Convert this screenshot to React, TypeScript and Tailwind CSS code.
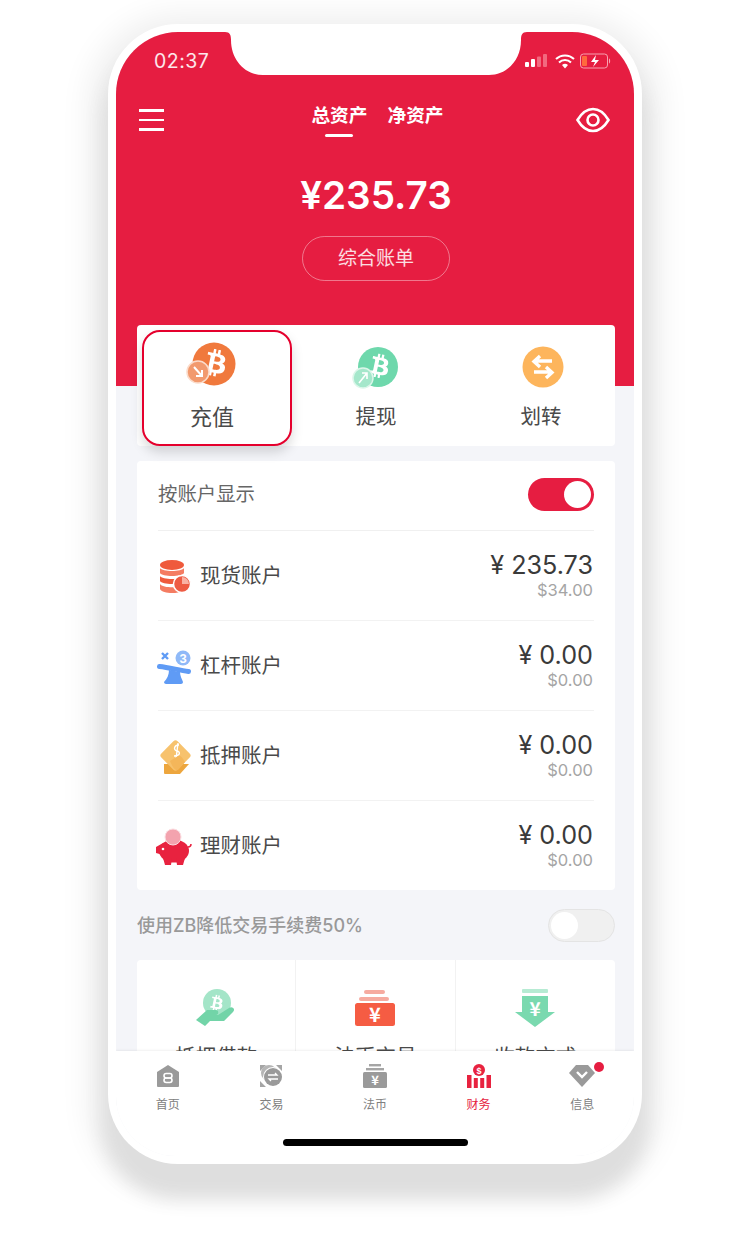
import React from 'react';
import { FaBtc } from 'react-icons/fa';

const FONT = "font-['Inter','Noto_Sans_CJK_SC',sans-serif]";

function Btc({ x, y, size, color = '#fff' }: { x: number; y: number; size: number; color?: string }) {
  return (
    <g transform={`rotate(12 ${x} ${y})`}>
      <FaBtc x={x - size / 2} y={y - size / 2} size={size} color={color} />
    </g>
  );
}

function DepositIcon() {
  return (
    <svg width="56" height="50" viewBox="0 0 56 50">
      <circle cx="31" cy="22" r="21.5" fill="#f0793d" />
      <Btc x={33} y={21} size={27} />
      <circle cx="15" cy="30" r="11" fill="#f29a6e" stroke="#fbdccb" strokeWidth="1.5" />
      <path d="M11 25l8 9M19 28v6h-6" stroke="#fff" strokeWidth="2" fill="none" />
    </svg>
  );
}

function WithdrawIcon() {
  return (
    <svg width="56" height="50" viewBox="0 0 56 50">
      <circle cx="31" cy="24" r="20" fill="#6ed8ac" />
      <Btc x={33} y={23} size={24} />
      <circle cx="16" cy="35" r="10" fill="#a5e7cb" stroke="#dcf6ea" strokeWidth="1.5" />
      <path d="M12 40l8-10M20 36v-6h-5" stroke="#fff" strokeWidth="1.6" fill="none" />
    </svg>
  );
}

function TransferIcon() {
  return (
    <svg width="42" height="42" viewBox="0 0 42 42">
      <circle cx="21" cy="21" r="20.5" fill="#fdb55c" />
      <path d="M30 15H14M18 10l-6 5.500 6 5.500" stroke="#fff" strokeWidth="3.400" fill="none" />
      <path d="M12 26h16M24 21l6 5.500-6 5.500" stroke="#fff" strokeWidth="3.400" fill="none" />
    </svg>
  );
}

function SpotIcon() {
  return (
    <svg width="34" height="36" viewBox="0 0 34 36">
      <ellipse cx="14" cy="6" rx="12" ry="5" fill="#ef5a3c" />
      <path d="M2 9c2 4 22 4 24 0v5c-2 4-22 4-24 0z" fill="#f47c62" />
      <path d="M2 17c2 4 22 4 24 0v5c-2 4-22 4-24 0z" fill="#ef5a3c" />
      <path d="M2 25c2 4 18 4 20 2l2 5c-4 3-20 3-22-2z" fill="#f47c62" />
      <circle cx="24" cy="25" r="8.500" fill="#ee5b43" stroke="#fff" strokeWidth="1.500" />
      <path d="M24 25v-7a7 7 0 0 1 7 7z" fill="#f9b2a4" />
    </svg>
  );
}

function LeverIcon() {
  return (
    <svg className="-ml-[2px]" width="36" height="34" viewBox="0 0 36 34">
      <path d="M6 3l6 6M12 3l-6 6" stroke="#5f9bf5" strokeWidth="2.400" />
      <circle cx="27" cy="8" r="7.500" fill="#8fb9f8" />
      <text x="27" y="13" textAnchor="middle" fontSize="13" fontFamily="Liberation Sans" fontWeight="700" fill="#fff">3</text>
      <path d="M3.500 16.500c10 1 20 4 29 5" stroke="#5f9bf5" strokeWidth="5" strokeLinecap="round" fill="none" />
      <path d="M13 20l11 2c0 4 2 7 3 10 0 1-1 2-2 2H10c-1 0-2-1-2-2 3-3 5-7 5-12z" fill="#5f9bf5" />
    </svg>
  );
}

function PledgeIcon() {
  return (
    <svg width="34" height="38" viewBox="0 0 34 38">
      <path d="M6 26v9a1 1 0 0 0 1 1h15l9-10z" fill="#eda63e" />
      <rect x="6" y="6" width="23" height="23" rx="3" transform="rotate(45 17.500 17.500)" fill="#f7c26d" />
      <path d="M21 7c-5 0-6 5-2 6s3 5-3 5M20 5l-2 16" stroke="#fff" strokeWidth="1.400" fill="none" />
      <path d="M12 23l8-5c3-1 5 3 7 6l-7 8c-3 1-6-4-8-9z" fill="#f4b65a" />
    </svg>
  );
}

function PiggyIcon() {
  return (
    <svg className="-ml-[3px]" width="38" height="38" viewBox="0 0 38 38">
      <ellipse cx="19" cy="23" rx="15" ry="11.500" fill="#e8223f" />
      <path d="M1 19l7-4v12l-7-2zM8 30h9l-1 7H10zM21 30h9l-2 7h-6z" fill="#e8223f" />
      <path d="M33 19c3 0 3-2 3-3" stroke="#e8223f" strokeWidth="1.500" fill="none" />
      <circle cx="18" cy="9" r="8" fill="#f3a3ae" stroke="#fbdde1" strokeWidth="1" />
      <circle cx="8" cy="21" r="1.300" fill="#fff" />
    </svg>
  );
}

function LoanIcon() {
  return (
    <svg width="42" height="42" viewBox="0 0 42 42">
      <circle cx="22" cy="15" r="14" fill="#a4e5c8" />
      <Btc x={22} y={15} size={16} />
      <path d="M1 32l11-10h9c3 0 3 5 0 5h-3 5l11-7c3-2 7 1 4 4l-9 9H15l-5 5z" fill="#72d4a8" />
    </svg>
  );
}

function FiatIcon() {
  return (
    <svg width="42" height="38" viewBox="0 0 42 38">
      <rect x="10" y="1" width="21" height="4" rx="2" fill="#f6aba0" />
      <rect x="5" y="8" width="30" height="4" rx="2" fill="#f6aba0" />
      <rect x="1" y="14" width="40" height="23" rx="2.500" fill="#f55c43" />
      <text x="21" y="33" textAnchor="middle" fontSize="20" fontWeight="700" fontFamily="Noto Sans CJK SC" fill="#fff">¥</text>
    </svg>
  );
}

function ReceiveIcon() {
  return (
    <svg width="42" height="40" viewBox="0 0 42 40">
      <rect x="8" y="1" width="26" height="4" rx="1" fill="#b6ebd3" />
      <path d="M8 8h26v16h7L21 39 1 24h7z" fill="#7ad9af" strokeLinejoin="round" />
      <text x="21" y="28" textAnchor="middle" fontSize="19" fontWeight="700" fontFamily="Noto Sans CJK SC" fill="#fff">¥</text>
    </svg>
  );
}

function NavHome() {
  return (
    <svg width="24" height="24" viewBox="0 0 24 24">
      <path d="M12 1l11 7v14a1 1 0 0 1-1 1H2a1 1 0 0 1-1-1V8z" fill="#9a9a9a" />
      <rect x="8" y="9.500" width="8" height="4.500" rx="2.200" fill="none" stroke="#fff" strokeWidth="1.600" />
      <rect x="8" y="14" width="8" height="4.500" rx="2.200" fill="none" stroke="#fff" strokeWidth="1.600" />
    </svg>
  );
}

function NavTrade() {
  return (
    <svg width="24" height="24" viewBox="0 0 24 24">
      <path d="M1 1h6L1 7zM23 1v6l-6-6zM1 23v-6l6 6z" fill="#a5a5a5" />
      <circle cx="10" cy="9" r="8" fill="#b5b5b5" />
      <circle cx="14" cy="13" r="10" fill="#fff" />
      <circle cx="14" cy="13" r="9" fill="#9a9a9a" />
      <path d="M9 11h9l-2-2M19 15h-9l2 2" stroke="#fff" strokeWidth="1.300" fill="none" />
    </svg>
  );
}

function NavFiat() {
  return (
    <svg width="24" height="25" viewBox="0 0 24 25">
      <rect x="6" y="0" width="12" height="2.400" fill="#a5a5a5" />
      <rect x="3" y="4" width="18" height="2.400" fill="#a5a5a5" />
      <rect x="0" y="8" width="24" height="16" rx="1.500" fill="#9a9a9a" />
      <text x="12" y="21" textAnchor="middle" fontSize="13" fontWeight="700" fontFamily="Noto Sans CJK SC" fill="#fff">¥</text>
    </svg>
  );
}

function NavFinance() {
  return (
    <svg width="24" height="24" viewBox="0 0 24 24">
      <circle cx="12" cy="6" r="6" fill="#e8223f" />
      <text x="12" y="9.500" textAnchor="middle" fontSize="9" fontWeight="700" fontFamily="Liberation Sans" fill="#fff">$</text>
      <path d="M0 11h4.500v13H0zM6.800 14h4v10h-4zM13.200 14h4v10h-4zM19.500 11H24v13h-4.500z" fill="#e8223f" />
    </svg>
  );
}

function NavMessage() {
  return (
    <svg width="26" height="24" viewBox="0 0 26 24">
      <path d="M7 1h12l7 8-13 14L0 9z" fill="#9a9a9a" />
      <path d="M8 8l5 5 5-5" stroke="#fff" strokeWidth="2.400" fill="none" />
    </svg>
  );
}

const accounts = [
  { name: '现货账户', cny: '¥ 235.73', usd: '$34.00', icon: <SpotIcon /> },
  { name: '杠杆账户', cny: '¥ 0.00', usd: '$0.00', icon: <LeverIcon /> },
  { name: '抵押账户', cny: '¥ 0.00', usd: '$0.00', icon: <PledgeIcon /> },
  { name: '理财账户', cny: '¥ 0.00', usd: '$0.00', icon: <PiggyIcon /> },
];

const tabs = [
  { name: '首页', icon: <NavHome /> },
  { name: '交易', icon: <NavTrade /> },
  { name: '法币', icon: <NavFiat /> },
  { name: '财务', icon: <NavFinance />, active: true },
  { name: '信息', icon: <NavMessage />, dot: true },
];

export default function App() {
  return (
    <div className={`w-[750px] h-[1238px] bg-white pt-6 overflow-hidden ${FONT}`}>
      <div className="mx-auto w-[534px] h-[1140px] p-2 rounded-[70px] bg-white shadow-[0_28px_18px_6px_#dedede,0_10px_32px_18px_#eeeeee]">
        <div className="relative w-[518px] h-[1124px] rounded-t-[62px] rounded-b-[60px] overflow-hidden bg-[#f4f5f9] flex flex-col">
          {/* notch */}
          <svg className="absolute left-[109px] top-0" width="302" height="43" viewBox="0 0 302 43">
            <path d="M0 0C5 0 6 3 6 8C6 28 20 43 38 43H264C282 43 296 28 296 8C296 3 297 0 302 0Z" fill="#fff" />
          </svg>

          <div className="h-[354px] shrink-0 bg-[#e61d41] text-white flex flex-col items-center">
            <div className="w-full h-[58px] pl-[38px] pr-[22px] flex items-center justify-between">
              <span className="mt-[2px] text-[19.500px] tracking-[0.5px] text-white/90">02:37</span>
              <div className="flex items-center">
                <svg width="22" height="14" viewBox="0 0 22 14">
                  <rect x="0" y="8" width="4" height="5" rx="1" fill="#fff" />
                  <rect x="6" y="5" width="4" height="8" rx="1" fill="#fff" />
                  <rect x="12" y="2.500" width="4" height="10.500" rx="1" fill="#f2697f" />
                  <rect x="18" y="0" width="4" height="13" rx="1" fill="#f2697f" />
                </svg>
                <svg className="ml-2" width="20" height="15" viewBox="0 0 20 15">
                  <path d="M1 5a13 13 0 0 1 18 0M4 8.500a8.500 8.500 0 0 1 12 0" stroke="#fff" strokeWidth="2" fill="none" />
                  <path d="M7 11a4.500 4.500 0 0 1 6 0l-3 3.500z" fill="#fff" />
                </svg>
                <svg className="ml-[5px]" width="32" height="16" viewBox="0 0 32 16">
                  <rect x="0.500" y="1" width="27" height="14" rx="3" fill="none" stroke="#f7a3b1" />
                  <rect x="2" y="3" width="5" height="10" rx="1" fill="#ff6a3d" />
                  <path d="M29 5.500c1.500 0 1.500 5 0 5z" fill="#f7a3b1" />
                  <path d="M16 2l-5 7h4l-2 5 6-7h-4z" fill="#fff" />
                </svg>
              </div>
            </div>

            <div className="relative w-full h-[60px] pl-[23px] pr-6 flex items-center justify-between">
              <div className="w-[25px] flex flex-col gap-[7px]">
                <div className="h-[2.500px] bg-white" />
                <div className="h-[2.500px] bg-white" />
                <div className="h-[2.500px] bg-white" />
              </div>
              <div className="flex gap-5 ml-[15px]">
                <div className="flex flex-col items-center">
                  <span className="text-[18.700px] leading-[26px] font-bold">总资产</span>
                  <div className="mt-[5px] w-7 h-[3px] rounded-full bg-white" />
                </div>
                <span className="text-[18.700px] leading-[26px] font-bold">净资产</span>
              </div>
              <svg width="34" height="26" viewBox="0 0 34 26" fill="none">
                <path d="M1.500 13C6 5.500 11 2 17 2s11 3.500 15.500 11C28 20.500 23 24 17 24S6 20.500 1.500 13z" stroke="#fff" strokeWidth="2.600" />
                <circle cx="17" cy="13" r="5.500" stroke="#fff" strokeWidth="2.600" />
              </svg>
            </div>

            <div className="mt-5 ml-[2px] h-[50px] text-[38.700px] leading-[50px] font-semibold">¥235.73</div>
            <div className="mt-4 ml-[2px] w-[148px] h-[45px] flex items-center justify-center rounded-full border border-white/40 text-[19px] text-white/85">
              <span className="mt-[2px]">综合账单</span>
            </div>
          </div>

          <div className="relative -mt-[61px] ml-[21px] mr-[19px] h-[121px] shrink-0 pl-[5px] pt-[5px] rounded-[4px] bg-white grid grid-cols-[150px_168px_155px]">
            <div className="h-[116px] flex flex-col items-center rounded-[18px] border-2 border-[#e5002d] bg-white shadow-[0_6px_12px_rgba(0,0,0,0.15)]">
              <div className="h-[50px] mt-[10px] -ml-3"><DepositIcon /></div>
              <span className="mt-[10px] -ml-[10px] text-[22px] leading-[30px] text-[#4a4a4a]">充值</span>
            </div>
            <div className="h-[116px] flex flex-col items-center">
              <div className="h-[50px] mt-[13px] -ml-[2px]"><WithdrawIcon /></div>
              <span className="mt-[9px] text-[20.500px] leading-[30px] text-[#4a4a4a]">提现</span>
            </div>
            <div className="h-[116px] pl-[7px] flex flex-col items-center">
              <div className="h-[42px] mt-[16px] ml-1"><TransferIcon /></div>
              <span className="mt-[14px] text-[20.500px] leading-[30px] text-[#4a4a4a]">划转</span>
            </div>
          </div>

          <div className="mt-[15px] ml-[21px] mr-[19px] h-[429px] shrink-0 px-[21px] rounded-[4px] bg-white">
            <div className="h-[70px] pb-[2px] flex items-center justify-between border-b border-[#f0f0f0]">
              <span className="text-[19.400px] text-[#666]">按账户显示</span>
              <div className="w-[66px] h-[33px] p-[3px] flex justify-end rounded-full bg-[#e61d41]">
                <div className="w-[27px] h-[27px] rounded-full bg-white" />
              </div>
            </div>
            {accounts.map((a, i) => (
              <div key={a.name} className={`${i < 3 ? 'h-[90px] border-b border-[#f2f2f2]' : 'h-[89px]'} pt-[2px] flex items-center justify-between`}>
                <div className="flex items-center">
                  <div className="w-[42px] h-[38px] flex items-center">{a.icon}</div>
                  <span className="text-[20.500px] text-[#4a4a4a]">{a.name}</span>
                </div>
                <div className="-mt-[2px] mr-[1px] flex flex-col items-end">
                  <span className="text-[25.200px] leading-[28px] text-[#3a3a3a]">{a.cny}</span>
                  <span className="text-[16.500px] leading-[22px] text-[#a5a5a5]">{a.usd}</span>
                </div>
              </div>
            ))}
          </div>

          <div className="ml-[21px] mr-[19px] h-[70px] shrink-0 flex items-center justify-between">
            <span className="text-[18px] font-medium text-[#999]">使用ZB降低交易手续费50%</span>
            <div className="w-[67px] h-[33px] p-[2px] rounded-full bg-[#f0f0f0] border border-[#e4e4e4]">
              <div className="w-[27px] h-[27px] rounded-full bg-white" />
            </div>
          </div>

          <div className="ml-[21px] mr-[19px] flex-1 min-h-0 rounded-t-[4px] bg-white grid grid-cols-3 divide-x divide-[#f2f2f2]">
            <div className="flex flex-col items-center">
              <div className="h-[42px] mt-[28px]"><LoanIcon /></div>
              <span className="mt-[12px] text-[20.500px] leading-[30px] text-[#4a4a4a]">抵押借款</span>
            </div>
            <div className="flex flex-col items-center">
              <div className="h-[42px] mt-[29px]"><FiatIcon /></div>
              <span className="mt-[11px] text-[20.500px] leading-[30px] text-[#4a4a4a]">法币交易</span>
            </div>
            <div className="flex flex-col items-center">
              <div className="h-[42px] mt-[28px]"><ReceiveIcon /></div>
              <span className="mt-[12px] text-[20.500px] leading-[30px] text-[#4a4a4a]">收款方式</span>
            </div>
          </div>

          <div className="relative h-[105px] shrink-0 bg-white shadow-[0_-1px_2px_rgba(0,0,0,0.06)]">
            <div className="pt-3 grid grid-cols-5">
              {tabs.map((t) => (
                <div key={t.name} className="relative flex flex-col items-center">
                  <div className="h-[26px] flex items-center">{t.icon}</div>
                  <span className={`mt-[7px] text-[12px] leading-[18px] ${t.active ? 'text-[#e61d41]' : 'text-[#808080]'}`}>{t.name}</span>
                  {t.dot && <div className="absolute left-[64px] -top-[1px] w-[10px] h-[10px] rounded-full bg-[#e61d41]" />}
                </div>
              ))}
            </div>
            <div className="mx-auto mt-[25px] w-[185px] h-[7px] rounded-full bg-black" />
          </div>
        </div>
      </div>
    </div>
  );
}
